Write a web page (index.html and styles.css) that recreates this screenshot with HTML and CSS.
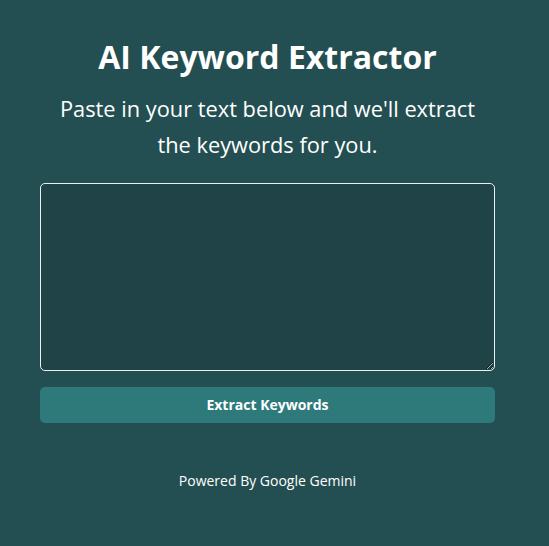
FILE: index.html
```html
<!DOCTYPE html>
<html lang="en">
<head>
<meta charset="utf-8">
<title>AI Keyword Extractor</title>
<link rel="stylesheet" href="styles.css">
</head>
<body>
<main class="page">
  <h1 class="title">AI Keyword Extractor</h1>
  <p class="subtitle">Paste in your text below and we'll extract the keywords for you.</p>
  <textarea class="input"></textarea>
  <button class="btn" type="button">Extract Keywords</button>
  <p class="footer">Powered By Google Gemini</p>
</main>
</body>
</html>
```

FILE: styles.css
```css
html, body {
  margin: 0;
  padding: 0;
  background: #244f52;
  height: 100%;
}
body {
  font-family: "Open Sans", "Noto Sans", sans-serif;
  color: #ffffff;
}
.page {
  box-sizing: border-box;
  width: 535px;
  padding: 36px 40px 0 40px;
  display: flex;
  flex-direction: column;
  align-items: stretch;
  text-align: center;
}
.title {
  margin: 0;
  font-size: 32px;
  font-weight: 700;
  line-height: 42px;
}
.subtitle {
  margin: 13px 10px 0 10px;
  font-size: 21.8px;
  line-height: 36px;
  font-weight: 400;
}
.input {
  box-sizing: border-box;
  margin-top: 20px;
  height: 188px;
  width: 100%;
  background: #1f4347;
  border: 1px solid #e6f2f2;
  border-radius: 5px;
  color: #ffffff;
  resize: vertical;
  outline: none;
}
.btn {
  margin-top: 16px;
  height: 36px;
  border: none;
  border-radius: 5px;
  background: #2e7a7b;
  color: #ffffff;
  font-family: "Open Sans", "Noto Sans", sans-serif;
  font-size: 14px;
  font-weight: 700;
  line-height: 34px;
}
.footer {
  margin: 48px 0 0 0;
  font-size: 14px;
  line-height: 20px;
}
```
